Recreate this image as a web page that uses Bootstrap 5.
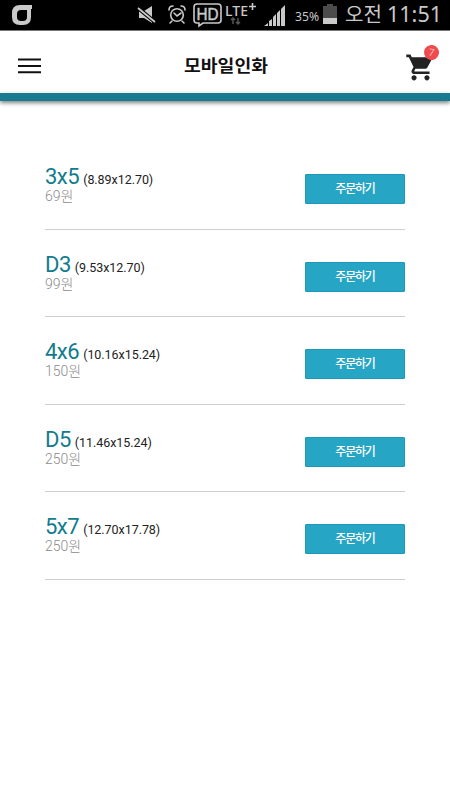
<!DOCTYPE html>
<html lang="ko">
<head>
<meta charset="utf-8">
<meta name="viewport" content="width=device-width, initial-scale=1">
<title>모바일인화</title>
<link href="https://cdn.jsdelivr.net/npm/bootstrap@5.3.0/dist/css/bootstrap.min.css" rel="stylesheet">
<style>
body{font-family:Roboto,"Noto Sans CJK KR",sans-serif;background:#fff;min-height:800px;overflow:hidden}
svg{display:block;flex:none;overflow:visible}
.status{height:31px;background:#000;border-bottom:1px solid #777}
.topbar{height:62px;padding:3px 9px 0 18px}
.stripe{height:8px;background:#187b92;box-shadow:0 2px 4px rgba(0,0,0,.5)}
.bar-btn{border:0;background:none;padding:0}
.cart-btn{width:36px;height:40px}
.cart-icon{margin-top:7px}
.menu-icon{margin-top:4px}
.page-title{margin:4px 0 0 5px;line-height:1}
.count{top:1px;right:2px;width:15px;height:15px;background:#f04a4e;color:#ffc9c9;font-size:10px;font-weight:400;line-height:15px;padding:0;transform:rotate(8deg)}
.sizes{margin:41px 45px 0}
.size-row{height:87.5px;border-bottom:1px solid #cfcfcf;padding-top:22px}
.size-name{font-size:22px;line-height:26px;color:#117c8c;letter-spacing:-.5px}
.dims{font-size:12.5px;line-height:26px;color:#222;letter-spacing:-.05px}
.price{font-size:14px;line-height:16px;color:#8c8c8c;margin-top:-5px;font-weight:300}
.order{width:100px;height:30px;margin-top:10px;padding:0;border:1px solid #1d99b8;border-radius:1px;background:#27a5c5;color:#fff;font-size:12px;line-height:28px;letter-spacing:-1.2px;font-weight:500}
.order:hover{background:#1d94b2;color:#fff}
</style>
<script src="https://cdn.jsdelivr.net/npm/bootstrap@5.3.0/dist/js/bootstrap.bundle.min.js"></script>
</head>
<body>
<div class="status">
<svg width="450" height="30" viewBox="0 0 450 30" fill="#c9c9c9" stroke="none">
  <path d="M32 5H20q-8 0-8 8v4q0 8 8 8h3q8 0 8-8V9h1zM27 10v7q0 4-4 4h-2q-4 0-4-4v-3q0-4 4-4z" fill-rule="evenodd"/>
  <path d="M139 11h5l8-5v17l-8-5h-5z"/>
  <path d="M138 8l17 14" stroke="#000" stroke-width="4"/><path d="M138 8l17 14" stroke="#c9c9c9" stroke-width="1.8"/>
  <g fill="none" stroke="#c9c9c9" stroke-width="1.6" stroke-linecap="round">
    <circle cx="177" cy="15" r="6.3"/><path d="M174 13l3 3 4-3M169 10q0-4 4-4M181 6q4 0 4 4M172 21l-2 2M182 21l2 2"/>
    <path d="M197 4h21q3 0 3 3v13q0 3-3 3h-15l-4 3v-3h-2q-3 0-3-3V7q0-3 3-3z"/>
  </g>
  <text x="196.5" y="19.5" font-family="Liberation Sans,sans-serif" font-size="16.5" stroke="#c9c9c9" stroke-width=".5" textLength="22" lengthAdjust="spacingAndGlyphs">HD</text>
  <text x="225" y="16" font-family="Noto Sans,sans-serif" font-size="14.5" font-weight="500" textLength="23" lengthAdjust="spacingAndGlyphs">LTE</text>
  <path d="M249 6.5h7M252.500 3v7" stroke="#c9c9c9" stroke-width="1.6"/>
  <path d="M233 24v-6M231 20l2-2 2 2M238 18v6M236 22l2 2 2-2" fill="none" stroke="#555" stroke-width="1.5"/>
  <path d="M264 26l4-3v3zM269 26v-5l3-2v7zM273 26v-9l3-3v12zM277 26V13l3-3v16zM281 26V9l4-4v21z"/>
  <text x="295" y="21" font-family="Noto Sans,sans-serif" font-size="13" textLength="24" lengthAdjust="spacingAndGlyphs">35%</text>
  <path d="M323 6h4V4h6v2h4v18h-14z" fill="#4b4b4b"/><path d="M323 18h14v6h-14z"/>
  <text x="345" y="21.500" font-family="Noto Sans CJK KR,sans-serif" font-size="20" textLength="37" lengthAdjust="spacingAndGlyphs">오전</text>
  <text x="387" y="22" font-family="Noto Sans,sans-serif" font-size="21" textLength="55" lengthAdjust="spacingAndGlyphs">11:51</text>
</svg>
</div>
<header>
  <div class="topbar d-flex align-items-center justify-content-between">
    <button class="bar-btn" type="button" aria-label="메뉴">
      <svg class="menu-icon" width="23" height="16" viewBox="0 0 23 16"><path d="M0 1.500h23M0 8h23M0 14.200h23" stroke="#111" stroke-width="2.1"/></svg>
    </button>
    <h1 class="page-title">
      <svg width="84" height="28" viewBox="0 0 84 28"><text x="0" y="20" font-family="Noto Sans CJK KR,sans-serif" font-size="16.5" font-weight="600" fill="#111" textLength="84" lengthAdjust="spacingAndGlyphs">모바일인화</text></svg>
    </h1>
    <button class="bar-btn cart-btn position-relative" type="button" aria-label="장바구니">
      <svg class="cart-icon" width="31" height="31" viewBox="0 0 24 24" fill="#222"><path d="M7 18c-1.1 0-1.99.9-1.99 2S5.9 22 7 22s2-.9 2-2-.9-2-2-2zM1 2v2h2l3.6 7.59-1.35 2.45c-.16.28-.25.61-.25.96 0 1.1.9 2 2 2h12v-2H7.42c-.14 0-.25-.11-.25-.25l.03-.12.9-1.63h7.45c.75 0 1.41-.41 1.75-1.03l3.58-6.49c.08-.14.12-.31.12-.48 0-.55-.45-1-1-1H5.21l-.94-2H1zm16 16c-1.1 0-1.99.9-1.99 2s.89 2 1.99 2 2-.9 2-2-.9-2-2-2z"/></svg>
      <span class="badge rounded-circle position-absolute count">7</span>
    </button>
  </div>
  <div class="stripe"></div>
</header>
<main class="sizes">
  <div class="size-row d-flex justify-content-between align-items-start">
    <div><div class="d-flex align-items-baseline gap-1"><span class="size-name">3x5</span><span class="dims">(8.89x12.70)</span></div><div class="price">69원</div></div>
    <button class="btn order" type="button">주문하기</button>
  </div>
  <div class="size-row d-flex justify-content-between align-items-start">
    <div><div class="d-flex align-items-baseline gap-1"><span class="size-name">D3</span><span class="dims">(9.53x12.70)</span></div><div class="price">99원</div></div>
    <button class="btn order" type="button">주문하기</button>
  </div>
  <div class="size-row d-flex justify-content-between align-items-start">
    <div><div class="d-flex align-items-baseline gap-1"><span class="size-name">4x6</span><span class="dims">(10.16x15.24)</span></div><div class="price">150원</div></div>
    <button class="btn order" type="button">주문하기</button>
  </div>
  <div class="size-row d-flex justify-content-between align-items-start">
    <div><div class="d-flex align-items-baseline gap-1"><span class="size-name">D5</span><span class="dims">(11.46x15.24)</span></div><div class="price">250원</div></div>
    <button class="btn order" type="button">주문하기</button>
  </div>
  <div class="size-row d-flex justify-content-between align-items-start">
    <div><div class="d-flex align-items-baseline gap-1"><span class="size-name">5x7</span><span class="dims">(12.70x17.78)</span></div><div class="price">250원</div></div>
    <button class="btn order" type="button">주문하기</button>
  </div>
</main>
</body>
</html>
